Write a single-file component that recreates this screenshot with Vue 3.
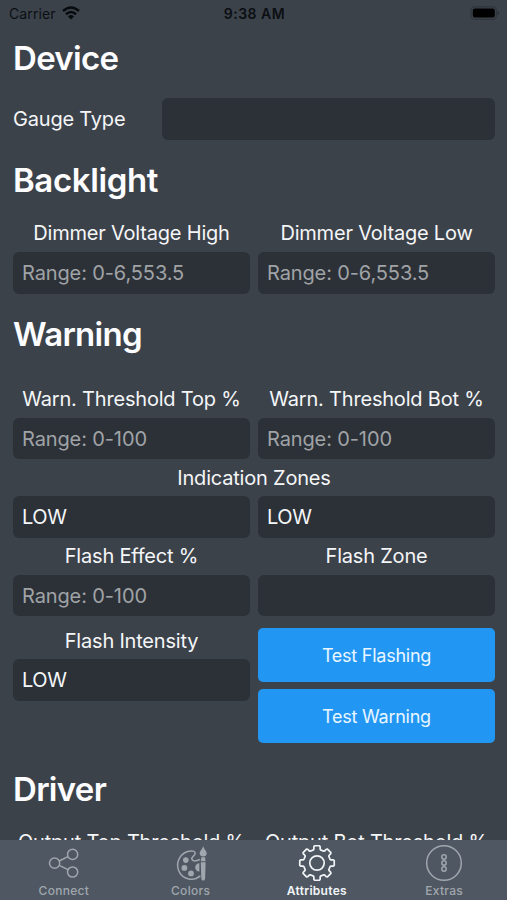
<script setup>
const tabs = [
  { id: 'connect', label: 'Connect' },
  { id: 'colors', label: 'Colors' },
  { id: 'attributes', label: 'Attributes', active: true },
  { id: 'extras', label: 'Extras' },
]
const teeth = [0, 45, 90, 135, 180, 225, 270, 315]
const point = (radius, degrees) => {
  const a = (degrees * Math.PI) / 180
  return `${(19 + radius * Math.sin(a)).toFixed(2)} ${(19 - radius * Math.cos(a)).toFixed(2)}`
}
const gear =
  'M' +
  teeth
    .map((t) =>
      [
        point(13.6, t - 15),
        point(14.4, t - 12.5),
        point(16.6, t - 11),
        point(17.4, t - 8),
        point(17.4, t + 8),
        point(16.6, t + 11),
        point(14.4, t + 12.5),
        point(13.6, t + 15),
      ].join(' L'),
    )
    .join(' L') +
  'Z'
</script>

<template>
  <div class="screen">
    <header class="status">
      <div class="carrier">
        <span>Carrier</span>
        <svg width="18" height="14" viewBox="0 0 18 14">
          <g fill="none" stroke="#080b0e" stroke-width="2.5">
            <path d="M1 5Q9-2 17 5" />
            <path d="M4 8.2Q9 3.7 14 8.2" />
          </g>
          <path d="M6 10.4Q9 7.7 12 10.4L9 13.6Z" fill="#080b0e" />
        </svg>
      </div>
      <div class="clock">9:38 AM</div>
      <div class="power">
        <svg width="31" height="14" viewBox="0 0 31 14">
          <rect x="2" y=".8" width="25.5" height="12.6" rx="3.8" fill="none" stroke="#2f353b" stroke-width="1.2" />
          <rect x="3.8" y="2.6" width="22" height="9" rx="2" fill="#000" />
          <path d="M28.8 5q2 2 0 4z" fill="#20262b" />
        </svg>
      </div>
    </header>

    <main class="content">
      <h1>Device</h1>
      <div class="gauge">
        <span class="label">Gauge Type</span>
        <div class="field"></div>
      </div>

      <h1 class="backlight">Backlight</h1>
      <div class="pair">
        <div><div class="label">Dimmer Voltage High</div><div class="field hint">Range: 0-6,553.5</div></div>
        <div><div class="label">Dimmer Voltage Low</div><div class="field hint">Range: 0-6,553.5</div></div>
      </div>

      <h1 class="warning">Warning</h1>
      <div class="pair">
        <div><div class="label">Warn. Threshold Top %</div><div class="field hint">Range: 0-100</div></div>
        <div><div class="label">Warn. Threshold Bot %</div><div class="field hint">Range: 0-100</div></div>
      </div>
      <div class="label low">Indication Zones</div>
      <div class="pair">
        <div class="field value">LOW</div>
        <div class="field value">LOW</div>
      </div>
      <div class="pair">
        <div><div class="label">Flash Effect %</div><div class="field hint">Range: 0-100</div></div>
        <div><div class="label">Flash Zone</div><div class="field"></div></div>
      </div>
      <div class="pair tests">
        <div><div class="label low">Flash Intensity</div><div class="field value">LOW</div></div>
        <div class="buttons">
          <button>Test Flashing</button>
          <button>Test Warning</button>
        </div>
      </div>

      <h1 class="driver">Driver</h1>
      <div class="pair">
        <div class="label">Output Top Threshold %</div>
        <div class="label">Output Bot Threshold %</div>
      </div>
    </main>

    <nav class="tabs">
      <div v-for="tab in tabs" :key="tab.id" class="tab" :class="{ active: tab.active }">
        <svg width="38" height="38" viewBox="0 0 38 38" fill="none" stroke="currentColor" stroke-width="1.5">
          <g v-if="tab.id === 'connect'">
            <circle cx="9.6" cy="19.2" r="5.1" />
            <circle cx="27.6" cy="10.4" r="5.1" />
            <circle cx="27.6" cy="28" r="5.1" />
            <path d="M14.2 17 23 12.7M14.2 21.4l8.8 4.3" />
          </g>
          <g v-else-if="tab.id === 'colors'" transform="translate(1.4 .7)">
            <path d="M27 31.2C20 37 9.8 34.8 6 27.4C1.7 19 5.6 9.5 14.3 6.8C18.4 5.5 22.5 6.3 21.6 9.3C21 11.3 17.7 12.3 18.5 14.6C19.3 17 23 16.4 26.5 14.8" />
            <g fill="currentColor" stroke="none">
              <circle cx="12.4" cy="15.4" r="2.8" />
              <circle cx="11" cy="23.2" r="2.9" />
              <circle cx="17.6" cy="28.7" r="2.9" />
              <path d="M26 18.5v8.2c-2.3.2-4.2-1.8-4.2-4 0-2.3 1.9-4.3 4.2-4.2z" />
              <path d="M29.8 1.2c-.5 3-3.7 5-3.5 7.5.1 1.7 1.4 3 3.5 3s3.5-1.3 3.5-3c.1-2.6-3-4.5-3.5-7.5zM27.9 12.6h3.8l.4 4h-4.6zM27.4 17.5h4.8l-.5 16c-.1 3.1-3.7 3.1-3.8 0z" />
            </g>
          </g>
          <g v-else-if="tab.id === 'attributes'" stroke-width="1.7" stroke-linejoin="round">
            <path :d="gear" />
            <circle cx="19" cy="19" r="7.2" />
          </g>
          <g v-else>
            <circle cx="19" cy="19" r="17.3" />
            <circle cx="19" cy="13" r="2.2" />
            <circle cx="19" cy="19" r="2.2" />
            <circle cx="19" cy="25" r="2.2" />
          </g>
        </svg>
        <span>{{ tab.label }}</span>
      </div>
    </nav>
  </div>
</template>

<style>
body {
  margin: 0;
  background: #3c4149;
}
</style>

<style scoped>
.screen {
  width: 507px;
  height: 900px;
  display: flex;
  flex-direction: column;
  overflow: hidden;
  background: #3c424a;
  color: #f4f6f8;
  font-family: Inter, 'Liberation Sans', sans-serif;
}
.status {
  flex: none;
  height: 28px;
  padding: 0 7px 0 9px;
  display: grid;
  grid-template-columns: 1fr auto 1fr;
  color: #0b0f13;
  font-size: 14px;
  line-height: 28px;
}
.carrier {
  display: flex;
  align-items: center;
  gap: 6px;
  letter-spacing: 0.1px;
}
.carrier svg {
  margin-top: -3px;
}
.clock {
  font-weight: 600;
  letter-spacing: 0.5px;
}
.power {
  display: flex;
  justify-content: flex-end;
  align-items: center;
  height: 26px;
}
.content {
  flex: 1;
  min-height: 0;
  overflow: hidden;
  padding: 10px 12px 0 13px;
}
h1 {
  margin: 0;
  height: 40px;
  line-height: 40px;
  font-size: 33px;
  font-weight: 600;
  letter-spacing: -0.7px;
  color: #fdfdff;
}
.gauge {
  display: grid;
  grid-template-columns: 149px 1fr;
  margin-top: 20px;
  height: 42px;
  align-items: center;
}
.gauge .label {
  text-align: left;
}
.backlight {
  margin: 20px 0 15px;
  letter-spacing: -0.38px;
}
.warning {
  margin: 20.5px 0 26.5px;
}
.driver {
  margin: 26px 0 14.5px;
}
.pair {
  display: grid;
  grid-template-columns: 1fr 1fr;
  gap: 8px;
}
.label {
  height: 37px;
  line-height: 37px;
  font-size: 20px;
  letter-spacing: -0.2px;
  text-align: center;
  white-space: nowrap;
}
.low {
  line-height: 38.5px;
}
.field {
  box-sizing: border-box;
  height: 41.5px;
  padding-left: 9px;
  border-radius: 6px;
  background: #2c3138;
  font-size: 20px;
  letter-spacing: -0.12px;
  line-height: 42px;
  white-space: nowrap;
}
.value {
  letter-spacing: -0.4px;
}
.hint {
  color: #a0a3a6;
}
.tests {
  margin-top: 6px;
}
.buttons {
  display: grid;
  grid-template-rows: 54px 54px;
  gap: 7px;
  padding-top: 6px;
}
button {
  border: 0;
  border-radius: 5px;
  padding: 0;
  background: #2296f3;
  color: #e9f6ff;
  font: 18px Inter, 'Liberation Sans', sans-serif;
  letter-spacing: -0.25px;
}
.tabs {
  flex: none;
  height: 60px;
  display: grid;
  grid-template-columns: repeat(4, 1fr);
  background: #4f5862;
}
.tab {
  display: flex;
  flex-direction: column;
  align-items: center;
  padding: 4px 0 0 1px;
  color: #a0a6ad;
  font-size: 12px;
  font-weight: 500;
  line-height: 18px;
  letter-spacing: 0.3px;
}
.tab.active {
  padding-left: 0;
  color: #f2f5f8;
  font-weight: 600;
}
</style>
